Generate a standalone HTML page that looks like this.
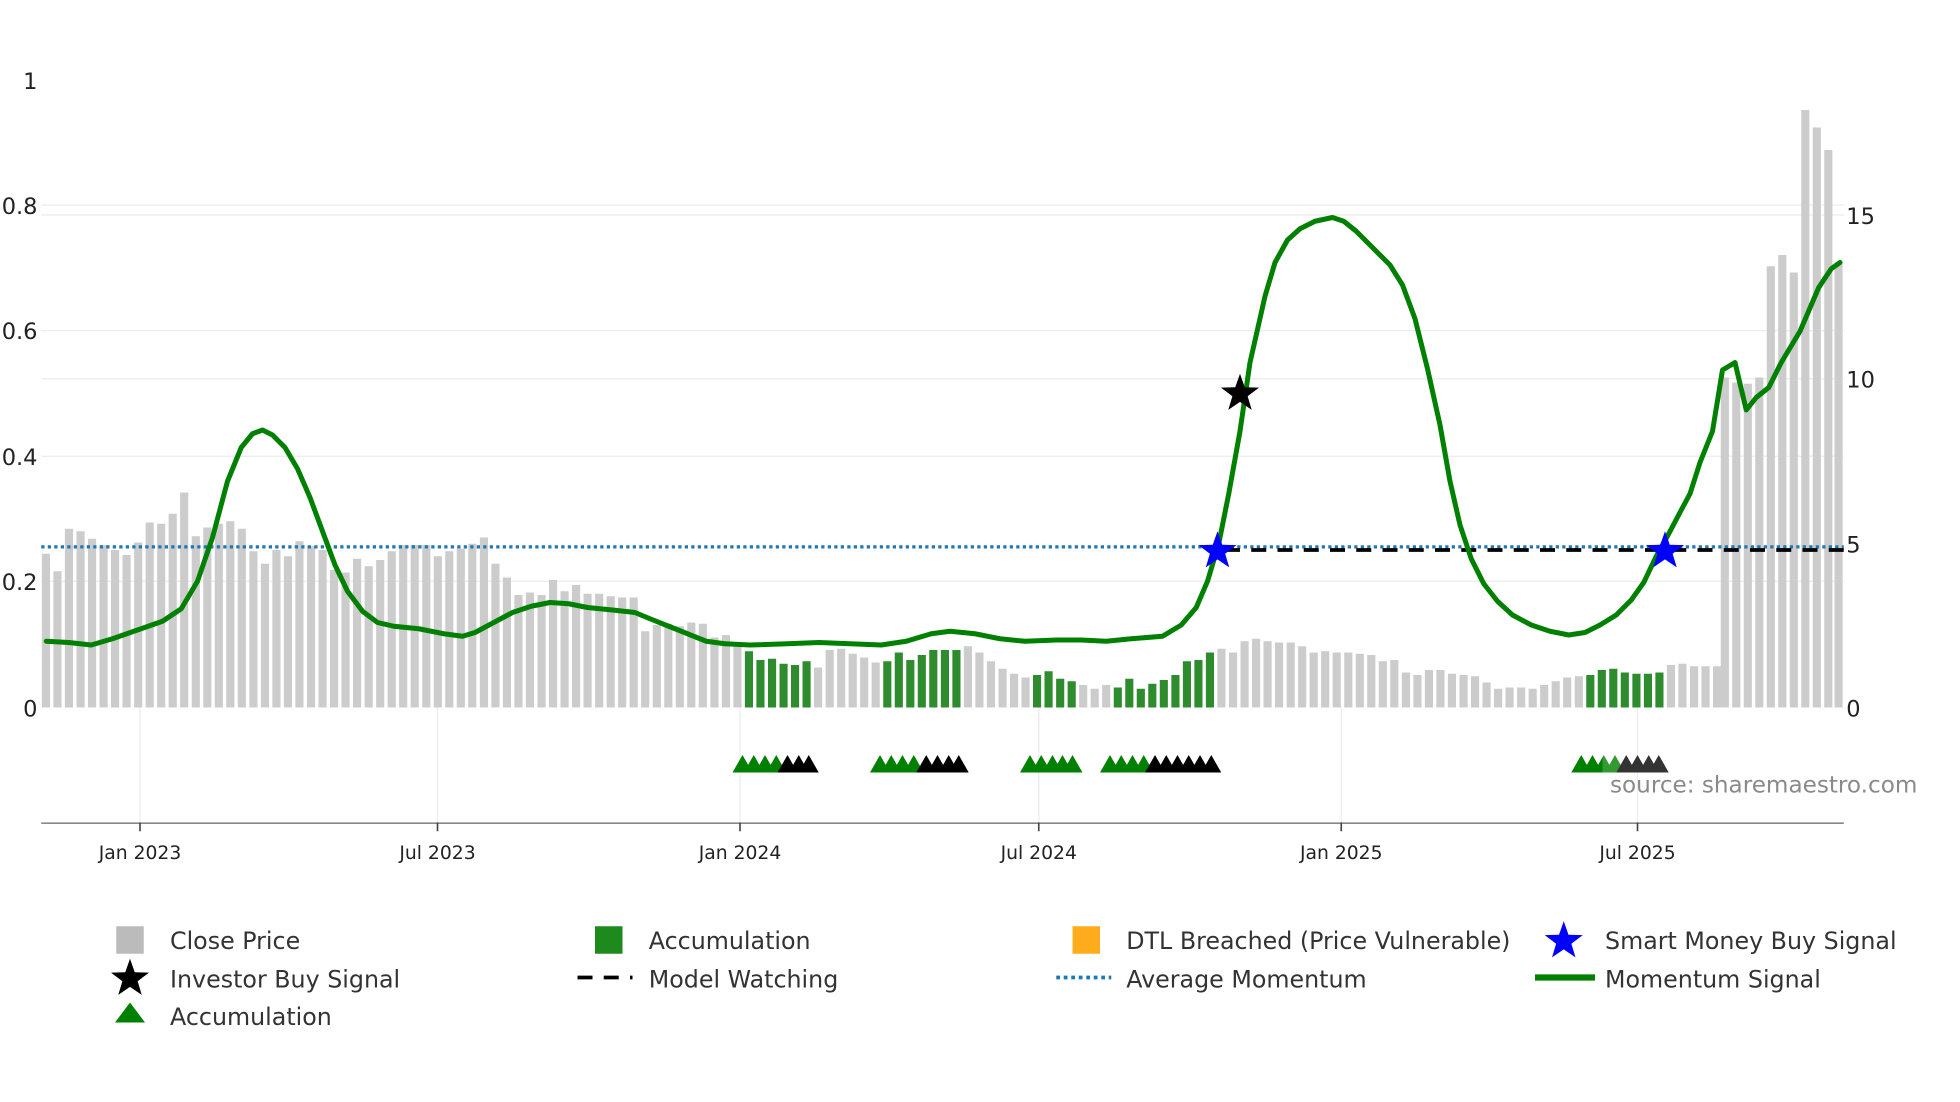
<!DOCTYPE html>
<html><head><meta charset="utf-8"><style>
html,body{margin:0;padding:0;background:#fff;}
svg{display:block;font-family:"DejaVu Sans","Liberation Sans",sans-serif;}
</style></head><body>
<svg width="1960" height="1102" viewBox="0 0 1568 881.6" xmlns="http://www.w3.org/2000/svg">
<rect width="1568" height="882" fill="#fff"/>
<g stroke="#ececec" stroke-width="1">
<line x1="33" y1="164" x2="1475" y2="164"/><line x1="33" y1="172" x2="1475" y2="172"/>
<line x1="33" y1="264.5" x2="1475" y2="264.5"/><line x1="33" y1="303" x2="1475" y2="303"/>
<line x1="33" y1="365" x2="1475" y2="365"/><line x1="33" y1="465" x2="1475" y2="465"/>
<line x1="112" y1="566" x2="112" y2="658"/><line x1="350" y1="566" x2="350" y2="658"/>
<line x1="592" y1="566" x2="592" y2="658"/><line x1="831" y1="566" x2="831" y2="658"/>
<line x1="1073" y1="566" x2="1073" y2="658"/><line x1="1310" y1="566" x2="1310" y2="658"/>
</g>
<path fill="#cccccc" d="
M33.5 566V443h6.5V566z M42.7 566V457h6.5V566z M51.9 566V423h6.5V566z M61.2 566V425h6.5V566z M70.4 566V431h6.5V566z M79.6 566V436h6.5V566z M88.8 566V440h6.5V566z M98 566V444h6.5V566z M107.3 566V434h6.5V566z M116.5 566V418h6.5V566z M125.7 566V419h6.5V566z M134.9 566V411h6.5V566z M144.1 566V394h6.5V566z M153.4 566V429h6.5V566z M162.6 566V422h6.5V566z M171.8 566V419h6.5V566z M181 566V417h6.5V566z M190.2 566V423h6.5V566z M199.5 566V441h6.5V566z M208.7 566V451h6.5V566z M217.9 566V440h6.5V566z M227.1 566V445h6.5V566z M236.3 566V433h6.5V566z M245.6 566V437h6.5V566z M254.8 566V440h6.5V566z M264 566V456h6.5V566z M273.2 566V458h6.5V566z M282.4 566V447h6.5V566z M291.7 566V453h6.5V566z M300.9 566V448h6.5V566z M310.1 566V441h6.5V566z M319.3 566V436h6.5V566z M328.5 566V436h6.5V566z M337.8 566V436h6.5V566z M347 566V445h6.5V566z M356.2 566V441h6.5V566z M365.4 566V439h6.5V566z M374.6 566V435h6.5V566z M383.9 566V430h6.5V566z M393.1 566V451h6.5V566z M402.3 566V462h6.5V566z M411.5 566V476h6.5V566z M420.7 566V474h6.5V566z M430 566V476h6.5V566z M439.2 566V464h6.5V566z M448.4 566V473h6.5V566z M457.6 566V468h6.5V566z M466.8 566V475h6.5V566z M476.1 566V475h6.5V566z M485.3 566V477h6.5V566z M494.5 566V478h6.5V566z M503.7 566V478h6.5V566z M512.9 566V505h6.5V566z M522.2 566V500h6.5V566z M531.4 566V499h6.5V566z M540.6 566V501h6.5V566z M549.8 566V498h6.5V566z M559 566V499h6.5V566z M568.3 566V510h6.5V566z M577.5 566V508h6.5V566z M586.7 566V514h6.5V566z
M651.2 566V534h6.5V566z M660.5 566V520h6.5V566z M669.7 566V519h6.5V566z M678.9 566V523h6.5V566z M688.1 566V526h6.5V566z M697.3 566V530h6.5V566z
M771.1 566V517h6.5V566z M780.3 566V522h6.5V566z M789.5 566V529h6.5V566z M798.8 566V535h6.5V566z M808 566V539h6.5V566z M817.2 566V542h6.5V566z
M863.3 566V548h6.5V566z M872.5 566V551h6.5V566z M881.7 566V548h6.5V566z
M973.9 566V519h6.5V566z M983.2 566V522h6.5V566z M992.4 566V513h6.5V566z M1001.6 566V511h6.5V566z M1010.8 566V513h6.5V566z M1020 566V514h6.5V566z M1029.3 566V514h6.5V566z M1038.5 566V517h6.5V566z M1047.7 566V522h6.5V566z M1056.9 566V521h6.5V566z M1066.1 566V522h6.5V566z M1075.4 566V522h6.5V566z M1084.6 566V523h6.5V566z M1093.8 566V524h6.5V566z M1103 566V529h6.5V566z M1112.2 566V528h6.5V566z M1121.5 566V538h6.5V566z M1130.7 566V540h6.5V566z M1139.9 566V536h6.5V566z M1149.1 566V536h6.5V566z M1158.3 566V539h6.5V566z M1167.6 566V540h6.5V566z M1176.8 566V541h6.5V566z M1186 566V546h6.5V566z M1195.2 566V551h6.5V566z M1204.4 566V550h6.5V566z M1213.7 566V550h6.5V566z M1222.9 566V551h6.5V566z M1232.1 566V548h6.5V566z M1241.3 566V545h6.5V566z M1250.5 566V542h6.5V566z M1259.8 566V541h6.5V566z
M1333.5 566V532h6.5V566z M1342.7 566V531h6.5V566z M1352 566V533h6.5V566z M1361.2 566V533h6.5V566z M1370.4 566V533h6.5V566z M1376.6 566V302h6.5V566z M1385.8 566V306h6.5V566z M1395 566V307h6.5V566z M1404.2 566V302h6.5V566z M1413.4 566V213h6.5V566z M1422.6 566V204h6.5V566z M1431.8 566V218h6.5V566z M1441 566V88h6.5V566z M1450.2 566V102h6.5V566z M1459.4 566V120h6.5V566z M1467.6 566V210h6.5V566z"/>
<path fill="#2e8b2e" d="
M595.9 566V521h6.5V566z M605.1 566V528h6.5V566z M614.4 566V527h6.5V566z M623.6 566V531h6.5V566z M632.8 566V532h6.5V566z M642 566V529h6.5V566z
M706.6 566V529h6.5V566z M715.8 566V522h6.5V566z M725 566V528h6.5V566z M734.2 566V524h6.5V566z M743.4 566V520h6.5V566z M752.7 566V520h6.5V566z M761.9 566V520h6.5V566z
M826.4 566V540h6.5V566z M835.6 566V537h6.5V566z M844.9 566V543h6.5V566z M854.1 566V545h6.5V566z
M891 566V550h6.5V566z M900.2 566V543h6.5V566z M909.4 566V551h6.5V566z M918.6 566V547h6.5V566z M927.8 566V544h6.5V566z M937.1 566V540h6.5V566z M946.3 566V529h6.5V566z M955.5 566V528h6.5V566z M964.7 566V522h6.5V566z
M1269 566V540h6.5V566z M1278.2 566V536h6.5V566z M1287.4 566V535h6.5V566z M1296.6 566V538h6.5V566z M1305.9 566V539h6.5V566z M1315.1 566V539h6.5V566z M1324.3 566V538h6.5V566z"/>
<line x1="33" y1="437.5" x2="1475" y2="437.5" stroke="#1f77b4" stroke-width="2.6" stroke-dasharray="2.6,2.6"/>
<line x1="980" y1="440" x2="1475" y2="440" stroke="#000" stroke-width="3" stroke-dasharray="12,9"/>
<polyline fill="none" stroke="#008000" stroke-width="4" stroke-linejoin="round" stroke-linecap="round" points="37,513 55,514 73,516 90,511 110,504 130,497 145,487 158,465 170,430 182,385 193,358 202,347 210,344 218,348 228,358 238,375 248,398 258,425 268,452 278,473 290,489 302,498 315,501 335,503 355,507 370,509 380,506 395,498 410,490 425,485 440,482 455,483 470,486 490,488 508,490 520,495 535,501 550,507 565,513 580,515 600,516 630,515 655,514 680,515 705,516 725,513 745,507 760,505 780,507 800,511 820,513 845,512 865,512 885,513 905,511 930,509 945,500 957,486 966,465 975,435 983,395 992,345 1000,290 1005,268 1012,237 1020,210 1030,192 1040,183 1052,177 1066,174 1075,177 1085,185 1100,200 1112,212 1122,228 1132,255 1142,295 1152,340 1160,385 1168,420 1177,447 1187,467 1198,481 1210,492 1225,500 1240,505 1255,508 1268,506 1280,500 1293,492 1305,480 1315,466 1325,445 1335,427 1345,408 1352,395 1360,370 1370,345 1378,296 1388,290 1397,328 1405,318 1415,310 1425,290 1440,265 1455,230 1465,215 1472,210"/>
<defs><path id="st" d="M0,-16 L3.8,-5.2 L15.2,-4.9 L6.1,2 L9.4,12.9 L0,6.5 L-9.4,12.9 L-6.1,2 L-15.2,-4.9 L-3.8,-5.2Z"/></defs>
<use href="#st" x="992" y="315" fill="#000"/>
<use href="#st" x="974" y="441" fill="#0000ff"/>
<use href="#st" x="1332" y="441" fill="#0000ff"/>
<defs><path id="tg" d="M-8,7 L0,-7 L8,7Z"/></defs>
<g fill="#008000">
<use href="#tg" x="594" y="611"/><use href="#tg" x="603" y="611"/><use href="#tg" x="612" y="611"/><use href="#tg" x="621" y="611"/>
<use href="#tg" x="704" y="611"/><use href="#tg" x="713" y="611"/><use href="#tg" x="722" y="611"/><use href="#tg" x="731" y="611"/>
<use href="#tg" x="824" y="611"/><use href="#tg" x="833" y="611"/><use href="#tg" x="842" y="611"/><use href="#tg" x="858" y="611"/><use href="#tg" x="850" y="611"/>
<use href="#tg" x="888" y="611"/><use href="#tg" x="897" y="611"/><use href="#tg" x="906" y="611"/><use href="#tg" x="915" y="611"/>
<use href="#tg" x="1265" y="611"/><use href="#tg" x="1274" y="611"/><use href="#tg" x="1283" y="611"/><use href="#tg" x="1292" y="611"/>
</g>
<g fill="#000">
<use href="#tg" x="630" y="611"/><use href="#tg" x="639" y="611"/><use href="#tg" x="647" y="611"/>
<use href="#tg" x="741" y="611"/><use href="#tg" x="750" y="611"/><use href="#tg" x="759" y="611"/><use href="#tg" x="767" y="611"/>
<use href="#tg" x="924" y="611"/><use href="#tg" x="933" y="611"/><use href="#tg" x="942" y="611"/><use href="#tg" x="951" y="611"/><use href="#tg" x="960" y="611"/><use href="#tg" x="969" y="611"/>
<use href="#tg" x="1301" y="611"/><use href="#tg" x="1310" y="611"/><use href="#tg" x="1319" y="611"/><use href="#tg" x="1327" y="611"/>
</g>
<rect x="1282" y="604" width="260" height="14" fill="#fff" opacity="0.2"/>
<text x="1288" y="634" font-size="18.5" fill="#8a8a8a">source: sharemaestro.com</text>
<line x1="33" y1="658.5" x2="1475" y2="658.5" stroke="#888" stroke-width="1.3"/>
<g stroke="#444" stroke-width="1.3">
<line x1="112" y1="658" x2="112" y2="665"/><line x1="350" y1="658" x2="350" y2="665"/><line x1="592" y1="658" x2="592" y2="665"/><line x1="831" y1="658" x2="831" y2="665"/><line x1="1073" y1="658" x2="1073" y2="665"/><line x1="1310" y1="658" x2="1310" y2="665"/>
</g>
<g font-size="15" fill="#222" text-anchor="middle">
<text x="112" y="687">Jan 2023</text><text x="350" y="687">Jul 2023</text><text x="592" y="687">Jan 2024</text><text x="831" y="687">Jul 2024</text><text x="1073" y="687">Jan 2025</text><text x="1310" y="687">Jul 2025</text>
</g>
<g font-size="18" fill="#222" text-anchor="end">
<text x="30" y="71">1</text><text x="30" y="171">0.8</text><text x="30" y="271">0.6</text><text x="30" y="372">0.4</text><text x="30" y="472">0.2</text><text x="30" y="573">0</text>
</g>
<g font-size="18" fill="#222">
<text x="1477" y="179">15</text><text x="1477" y="310">10</text><text x="1477" y="442">5</text><text x="1477" y="573">0</text>
</g>
<g font-size="19" fill="#333">
<rect x="93" y="741" width="22" height="22" fill="#bbbbbb"/><text x="136" y="759">Close Price</text>
<rect x="476" y="741" width="22" height="22" fill="#1e8a1e"/><text x="519" y="759">Accumulation</text>
<rect x="858" y="741" width="22" height="22" fill="#ffac1c"/><text x="901" y="759">DTL Breached (Price Vulnerable)</text>
<use href="#st" x="1251" y="753" fill="#0000ff"/><text x="1284" y="759">Smart Money Buy Signal</text>
<use href="#st" x="104" y="783" fill="#000"/><text x="136" y="790">Investor Buy Signal</text>
<line x1="462" y1="782" x2="506" y2="782" stroke="#000" stroke-width="3" stroke-dasharray="12,9"/><text x="519" y="790">Model Watching</text>
<line x1="845" y1="782" x2="889" y2="782" stroke="#1f77b4" stroke-width="3" stroke-dasharray="3,3"/><text x="901" y="790">Average Momentum</text>
<line x1="1228" y1="782" x2="1276" y2="782" stroke="#008000" stroke-width="5"/><text x="1284" y="790">Momentum Signal</text>
<path d="M92,818 L104,802 L116,818Z" fill="#008000"/><text x="136" y="820">Accumulation</text>
</g>
</svg>
</body></html>
